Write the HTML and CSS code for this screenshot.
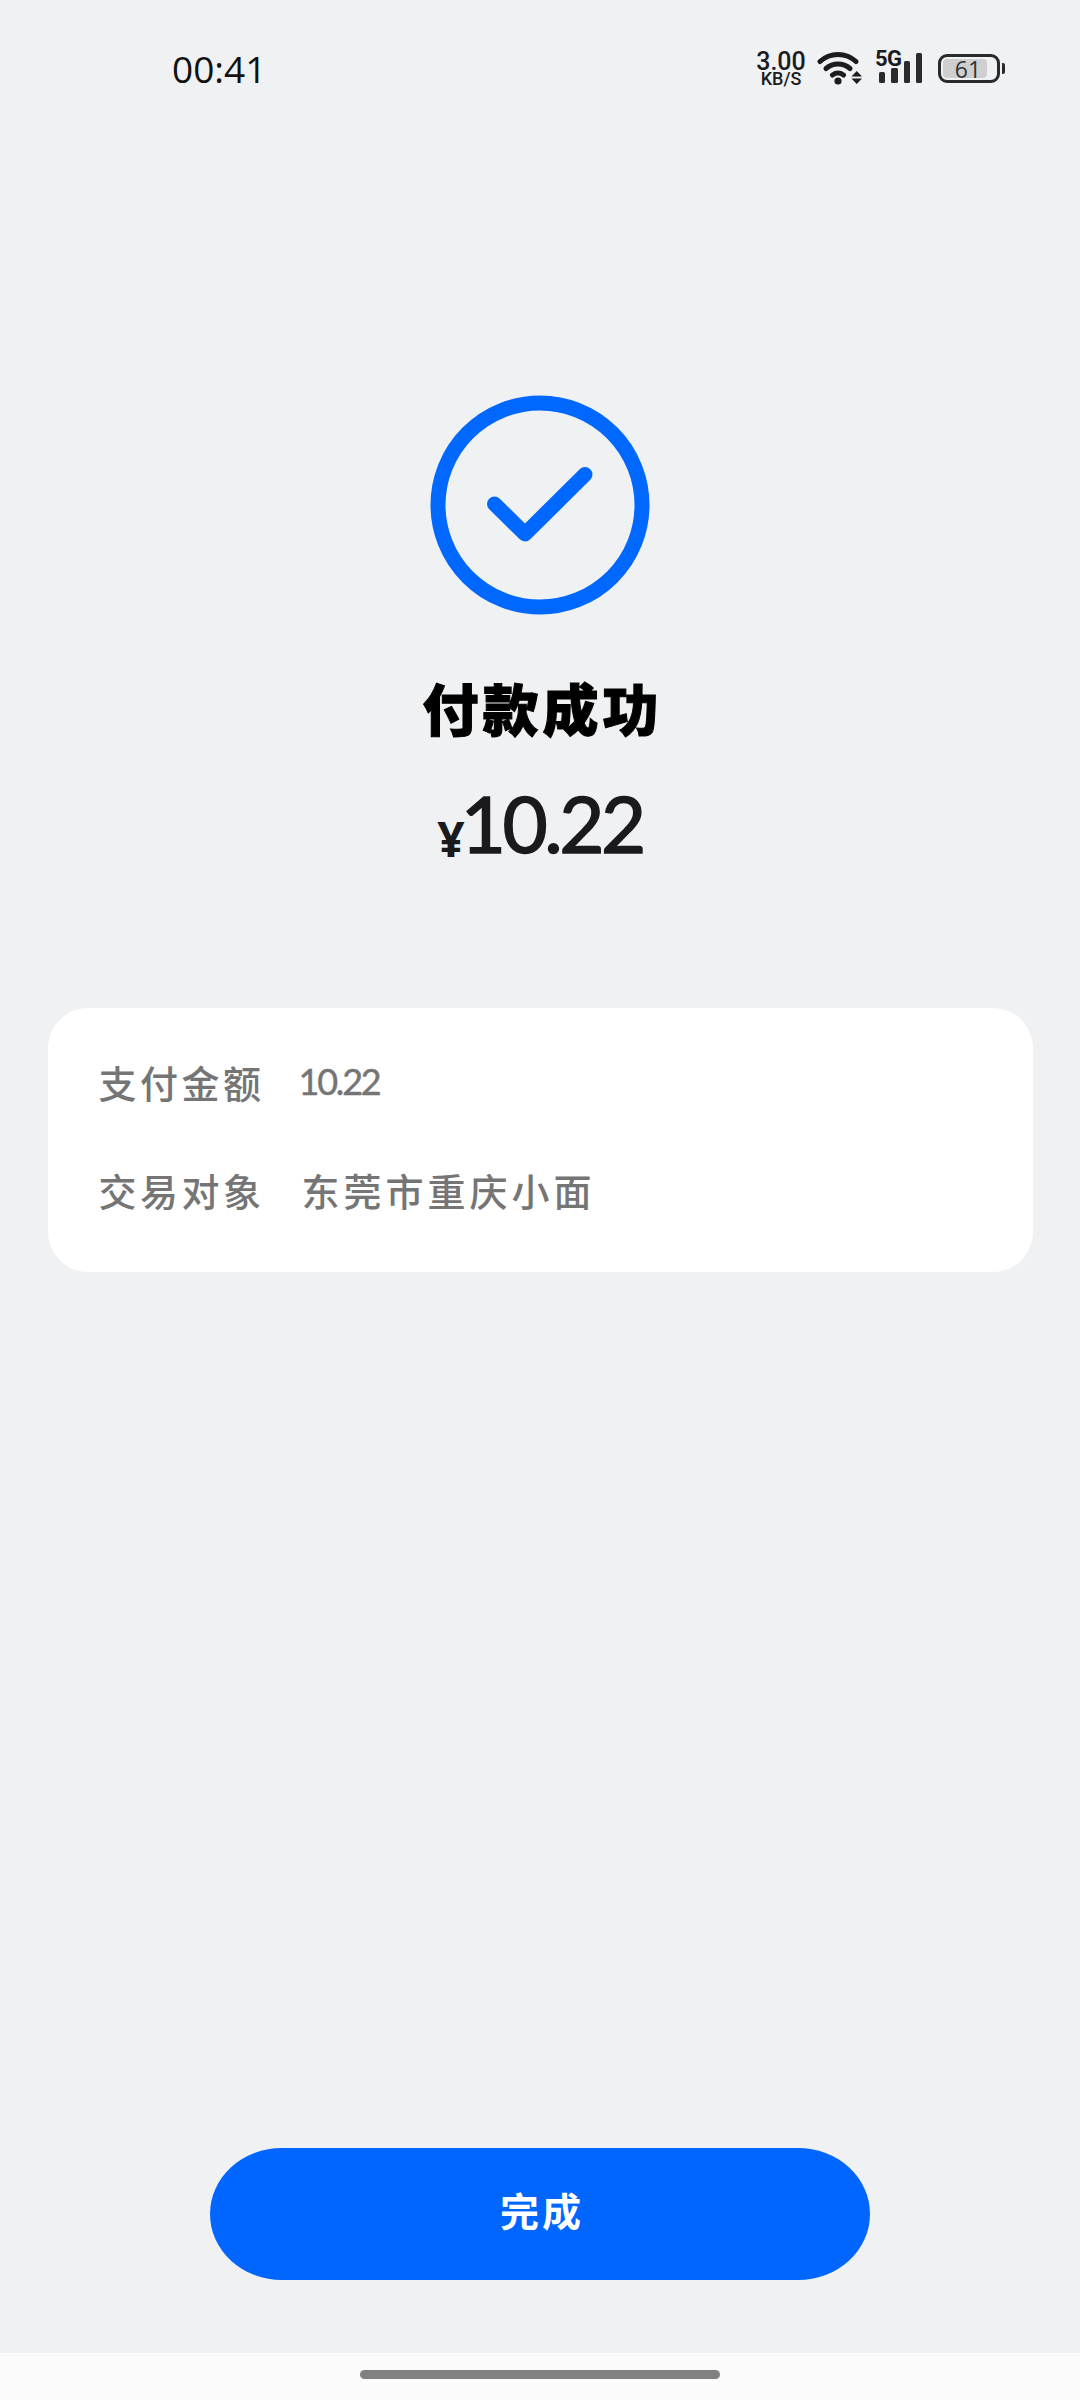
FILE: index.html
```html
<!doctype html>
<html lang="zh-CN">
<head>
  <meta charset="UTF-8">
  <meta name="viewport" content="width=device-width, initial-scale=1.0">
  <title>付款成功</title>
  <link rel="stylesheet" href="styles.css">
</head>
<body>
  <header class="status-bar">
    <span class="time">00:41</span>
    <div class="status-icons">
      <div class="net-speed">
        <span class="speed-num">3.00</span>
        <span class="speed-unit">KB/S</span>
      </div>
      <svg class="wifi" width="46" height="34" viewBox="0 0 46 34">
        <g fill="none" stroke="#1c1c1e" stroke-width="5" stroke-linecap="round">
          <path d="M3 10.500C13 1 29 1 39 10.500"/>
          <path d="M9 17.500C16 11.500 26 11.500 33 17.500"/>
          <path d="M15.500 24C19 21.500 23 21.500 26.500 24"/>
        </g>
        <circle cx="21" cy="30" r="3.600" fill="#1c1c1e"/>
        <path d="M34.500 25.500L45 25.500L39.750 20ZM34.500 27.500L45 27.500L39.750 33Z" fill="#1c1c1e"/>
      </svg>
      <div class="signal">
        <span class="signal-label">5G</span>
        <i class="bar bar-1"></i>
        <i class="bar bar-2"></i>
        <i class="bar bar-3"></i>
        <i class="bar bar-4"></i>
      </div>
      <div class="battery">
        <div class="battery-body">
          <div class="battery-fill"></div>
          <span class="battery-num">61</span>
        </div>
        <div class="battery-cap"></div>
      </div>
    </div>
  </header>

  <main class="content">
    <svg class="success-icon" width="220" height="220" viewBox="0 0 220 220">
      <circle cx="110" cy="110" r="102" fill="none" stroke="#0068ff" stroke-width="15"/>
      <path d="M64.500 109L95 139L155 79.500" fill="none" stroke="#0068ff" stroke-width="15" stroke-linecap="round" stroke-linejoin="round"/>
    </svg>
    <h1 class="title">付款成功</h1>
    <div class="amount"><span class="yen">¥</span>10.22</div>

    <section class="card">
      <div class="row">
        <span class="label">支付金额</span>
        <span class="value-num">10.22</span>
      </div>
      <div class="row">
        <span class="label">交易对象</span>
        <span class="value">东莞市重庆小面</span>
      </div>
    </section>

    <button class="done-btn">完成</button>
  </main>

  <footer class="nav-bar">
    <div class="home-indicator"></div>
  </footer>
</body>
</html>
```

FILE: styles.css
```css
* { box-sizing: border-box; }
html, body { margin: 0; height: 2400px; }
body { display: flex; flex-direction: column; background: #f0f1f3; color: #1c1c1e; font-family: "Noto Sans", "Noto Sans CJK SC", sans-serif; overflow: hidden; }

.status-bar { height: 100px; flex: none; display: flex; justify-content: space-between; align-items: flex-start; padding: 45px 75px 0 172px; }
.time { font-family: "Open Sans", sans-serif; font-size: 37px; line-height: 48px; color: #111; }
.status-icons { display: flex; align-items: flex-start; margin-top: 5px; }
.net-speed { display: flex; flex-direction: column; align-items: center; width: 52px; margin-top: 2px; font-family: Roboto, sans-serif; font-weight: 500; }
.speed-num { font-size: 25px; line-height: 19px; }
.speed-unit { font-size: 18px; line-height: 16px; }
.wifi { margin: 1px 0 0 10px; display: block; }
.signal { width: 46px; height: 32px; margin: 1px 0 0 13px; display: flex; align-items: flex-end; gap: 6px; position: relative; padding-left: 3px; }
.signal-label { position: absolute; left: -1px; top: -2px; font-family: Roboto, sans-serif; font-weight: 700; font-size: 22px; line-height: 20px; letter-spacing: -0.500px; }
.bar { display: block; width: 6.500px; background: #2a2a2c; border-radius: 1.500px; }
.bar-1 { height: 11px; }
.bar-2 { height: 15px; }
.bar-3 { height: 22px; }
.bar-4 { height: 30px; }
.battery { display: flex; align-items: center; margin: 4px 0 0 16px; }
.battery-body { position: relative; width: 62px; height: 29px; border: 3px solid #2a2a2c; border-radius: 9px; padding: 2px; display: flex; }
.battery-fill { width: 44px; background: #cfcfd1; border-radius: 4px; }
.battery-num { position: absolute; left: 0; right: 2px; top: 0; text-align: center; font-family: "Open Sans", sans-serif; font-size: 23px; line-height: 24px; color: #333; }
.battery-cap { width: 3px; height: 11px; margin-left: 2px; background: #2a2a2c; border-radius: 0 2px 2px 0; }

.content { flex: 1; display: flex; flex-direction: column; align-items: center; padding: 295px 47px 73px 47px; }
.success-icon { display: block; flex: none; }
.title { margin: 51px 0 0; padding-left: 5px; font-family: "Noto Sans CJK SC", sans-serif; font-size: 56px; line-height: 82px; font-weight: 900; letter-spacing: 4px; color: #000; -webkit-text-stroke: 1px #000; }
.amount { margin-top: 30px; font-family: Lato, sans-serif; font-size: 78px; line-height: 90px; font-weight: 400; letter-spacing: -3.500px; color: #1a1a1c; -webkit-text-stroke: 1.500px #1a1a1c; }
.yen { font-family: "Noto Sans", sans-serif; font-size: 48px; font-weight: 700; letter-spacing: 0; margin-right: -4px; vertical-align: -4px; line-height: 0; -webkit-text-stroke: 0; }

.card { width: 985px; flex: none; height: 264px; margin-top: 140px; padding: 43px 50px 0 51px; background: #fff; border-radius: 40px; }
.row { display: flex; align-items: center; height: 60px; margin-bottom: 48px; color: #757575; }
.label { width: 200px; flex: none; font-size: 38px; letter-spacing: 3.500px; font-weight: 500; font-family: "Noto Sans CJK SC", sans-serif; }
.value { font-size: 38px; letter-spacing: 4px; font-weight: 500; font-family: "Noto Sans CJK SC", sans-serif; margin-left: 3px; }
.value-num { font-family: Lato, sans-serif; font-size: 36px; letter-spacing: -2.200px; -webkit-text-stroke: 0.500px #757575; }

.done-btn { width: 660px; height: 132px; margin-top: auto; padding: 0 0 10px 4px; border: none; border-radius: 72px / 66px; background: #0066ff; color: #fff; font-family: "Noto Sans CJK SC", sans-serif; font-size: 39px; font-weight: 700; letter-spacing: 3px; }

.nav-bar { height: 47px; flex: none; display: flex; justify-content: center; padding-top: 17px; background: #fbfbfb; }
.home-indicator { width: 360px; height: 9px; background: #808080; border-radius: 5px; }
```
